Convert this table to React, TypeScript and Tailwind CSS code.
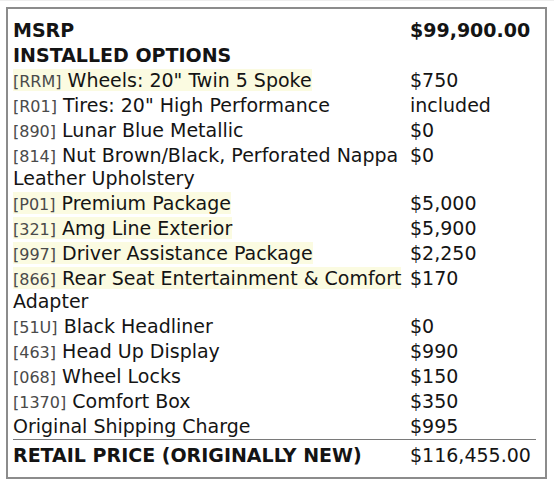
type Option = {
  code?: string;
  name: string;
  tail?: string;
  price: string;
  marked?: boolean;
};

const OPTIONS: Option[] = [
  { code: "RRM", name: 'Wheels: 20" Twin 5 Spoke', price: "$750", marked: true },
  { code: "R01", name: 'Tires: 20" High Performance', price: "included" },
  { code: "890", name: "Lunar Blue Metallic", price: "$0" },
  { code: "814", name: "Nut Brown/Black, Perforated Nappa Leather Upholstery", price: "$0" },
  { code: "P01", name: "Premium Package", price: "$5,000", marked: true },
  { code: "321", name: "Amg Line Exterior", price: "$5,900", marked: true },
  { code: "997", name: "Driver Assistance Package", price: "$2,250", marked: true },
  { code: "866", name: "Rear Seat Entertainment & Comfort", tail: " Adapter", price: "$170", marked: true },
  { code: "51U", name: "Black Headliner", price: "$0" },
  { code: "463", name: "Head Up Display", price: "$990" },
  { code: "068", name: "Wheel Locks", price: "$150" },
  { code: "1370", name: "Comfort Box", price: "$350" },
  { name: "Original Shipping Charge", price: "$995" },
];

function OptionRow({ option }: { option: Option }) {
  const label = (
    <>
      {option.code ? (
        <>
          <span className="text-[16px] leading-none text-[#4a4a4a]">[{option.code}]</span>{" "}
        </>
      ) : null}
      {option.name}
    </>
  );

  return (
    <>
      <div className="py-px">
        {option.marked ? <span className="bg-[#fbfbe1]">{label}</span> : label}
        {option.tail}
      </div>
      <div className="py-px">{option.price}</div>
    </>
  );
}

export default function App() {
  return (
    <div
      className="h-[487px] w-[554px] border-t border-[#eeeeee] bg-white px-[6px] pt-[6px] text-[19px] leading-[23px] text-[#141414]"
      style={{ fontFamily: '"DejaVu Sans", Verdana, sans-serif' }}
    >
      <div className="h-[472px] w-[541px] border-2 border-[#8c8c8c] pl-[5px] pr-[9px] pt-[9px]">
        <div className="grid grid-cols-[397px_1fr]">
          <div className="py-px font-bold">MSRP</div>
          <div className="py-px font-bold">$99,900.00</div>
          <div className="col-span-2 py-px font-bold">INSTALLED OPTIONS</div>
          {OPTIONS.map((option) => (
            <OptionRow key={option.name} option={option} />
          ))}
        </div>
        <div className="grid grid-cols-[397px_1fr] border-t border-[#7a7a7a] pt-[3px]">
          <div className="py-px font-bold">RETAIL PRICE (ORIGINALLY NEW)</div>
          <div className="py-px">$116,455.00</div>
        </div>
      </div>
    </div>
  );
}
